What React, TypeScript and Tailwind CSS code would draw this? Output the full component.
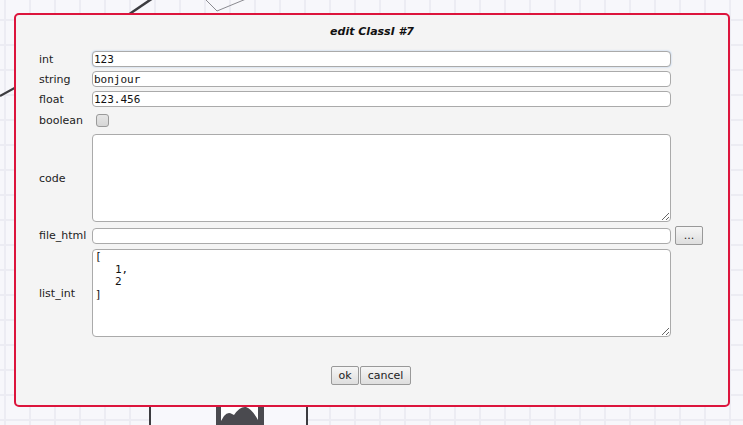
const SANS = "font-['DejaVu_Sans',Verdana,sans-serif]";
const MONO = "font-['DejaVu_Sans_Mono','Liberation_Mono',monospace]";

function Canvas() {
  return (
    <svg className="absolute inset-0" width="743" height="425" viewBox="0 0 743 425">
      <defs>
        <pattern id="grid" x="4" y="19" width="25" height="25" patternUnits="userSpaceOnUse">
          <rect x="0" y="0" width="2" height="25" fill="#ececf3" />
          <rect x="0" y="0" width="25" height="2" fill="#ececf3" />
        </pattern>
      </defs>
      <rect width="743" height="425" fill="#f7f7fb" />
      <rect width="743" height="425" fill="url(#grid)" />
      <line x1="0" y1="96" x2="20" y2="85" stroke="#3c3c40" strokeWidth="2" />
      <line x1="128" y1="15" x2="153" y2="-2" stroke="#3c3c40" strokeWidth="2.5" />
      <polyline points="205,-1 217,11 246,-1" fill="none" stroke="#8a8a90" strokeWidth="1" />
      <rect x="150" y="390" width="157" height="50" fill="#f8f8fc" stroke="#3c3c40" strokeWidth="2" />
      <rect x="216" y="392" width="48" height="40" fill="#4a4a4f" />
      <rect x="221" y="396" width="37" height="30" fill="#ffffff" />
      <path d="M221 421 L224 416 Q228 411 232 414 L234 415 Q240 406 246 407 Q252 409 258 420 L258 426 L221 426 Z" fill="#4a4a4f" />
    </svg>
  );
}

function Row({ label, h, mt, children }: { label: string; h: string; mt: string; children: React.ReactNode }) {
  return (
    <div className={`flex items-center ${h} ${mt}`}>
      <div className="w-[53px] pt-[2px] text-[11px] text-[#222]">{label}</div>
      {children}
    </div>
  );
}

const inputCls = `h-[16px] w-[579px] rounded-[4px] border border-[#aaa] bg-white px-[1px] pt-[1px] text-[11px] leading-[14px] text-[#111] outline-none ${MONO}`;
const areaCls = `h-[88px] w-[579px] rounded-[4px] border border-[#aaa] bg-white px-[2px] py-[1px] text-[11px] leading-[12.6px] text-[#111] outline-none ${MONO}`;
const btnCls = `h-[19px] rounded-[2px] border border-[#999] bg-[linear-gradient(#f6f6f6,#dedede)] text-[11px] leading-[17px] text-[#222] ${SANS}`;

export default function App() {
  return (
    <div className={`relative h-[425px] w-[743px] overflow-hidden ${SANS}`}>
      <Canvas />
      <div className="absolute left-[14px] top-[13px] flex h-[394px] w-[716px] flex-col rounded-[5px] border-2 border-[#dc143c] bg-[#f4f4f4]">
        <div className="pt-[10px] text-center text-[11px] font-bold italic leading-[14px] text-[#111]">
          edit ClassI #7
        </div>
        <div className="flex flex-col pl-[23px]">
          <Row label="int" h="h-[16px]" mt="mt-[12px]">
            <input
              defaultValue="123"
              className={`${inputCls} border-[#80a8d8] shadow-[0_0_2px_#a8c6ec]`}
            />
          </Row>
          <Row label="string" h="h-[16px]" mt="mt-[4px]">
            <input defaultValue="bonjour" className={inputCls} />
          </Row>
          <Row label="float" h="h-[16px]" mt="mt-[4px]">
            <input defaultValue="123.456" className={inputCls} />
          </Row>
          <Row label="boolean" h="h-[19px]" mt="mt-[4px]">
            <span className="ml-[4px] block h-[13px] w-[13px] rounded-[3px] border border-[#9a9a9a] bg-[linear-gradient(#e6e6e6,#d6d6d6)]" />
          </Row>
          <Row label="code" h="h-[88px]" mt="mt-[4px]">
            <textarea defaultValue="" className={areaCls} />
          </Row>
          <Row label="file_html" h="h-[19px]" mt="mt-[4px]">
            <input defaultValue="" className={inputCls} />
            <button className={`ml-[4px] w-[28px] ${btnCls}`}>...</button>
          </Row>
          <Row label="list_int" h="h-[88px]" mt="mt-[4px]">
            <textarea defaultValue={"[\n   1,\n   2\n]"} className={areaCls} />
          </Row>
        </div>
        <div className="mt-[29px] flex justify-center gap-[1px] pr-[2px]">
          <button className={`w-[28px] ${btnCls}`}>ok</button>
          <button className={`w-[51px] ${btnCls}`}>cancel</button>
        </div>
      </div>
    </div>
  );
}
